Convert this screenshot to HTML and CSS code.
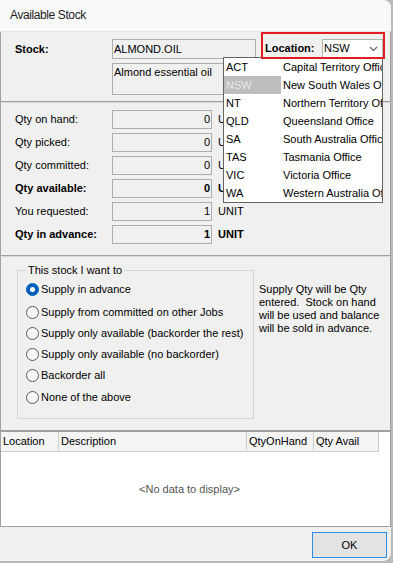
FILE: index.html
```html
<!DOCTYPE html>
<html lang="en">
<head>
<meta charset="utf-8">
<title>Available Stock</title>
<link rel="stylesheet" href="styles.css">
</head>
<body>
<div class="window">
  <div class="titlebar">Available Stock</div>

  <div class="panel stock-panel">
    <div class="label bold">Stock:</div>
    <div class="field code-field">ALMOND.OIL</div>
    <div class="location">
      <span class="label bold loc-label">Location:</span>
      <div class="combo">
        <span class="combo-value">NSW</span>
        <svg class="chevron" width="9" height="6" viewBox="0 0 9 6"><polyline points="1,1 4.5,4.5 8,1" fill="none" stroke="#6b6b6b" stroke-width="1.3"/></svg>
      </div>
    </div>
    <div class="field desc-field">Almond essential oil</div>
  </div>

  <div class="panel qty-panel">
    <div class="label">Qty on hand:</div><div class="field num">0</div><div class="unit">UNIT</div>
    <div class="label">Qty picked:</div><div class="field num">0</div><div class="unit">UNIT</div>
    <div class="label">Qty committed:</div><div class="field num">0</div><div class="unit">UNIT</div>
    <div class="label bold">Qty available:</div><div class="field num bold">0</div><div class="unit bold">UNIT</div>
    <div class="label">You requested:</div><div class="field num">1</div><div class="unit">UNIT</div>
    <div class="label bold">Qty in advance:</div><div class="field num bold">1</div><div class="unit bold">UNIT</div>
  </div>

  <div class="panel choice-panel">
    <fieldset class="group">
      <legend>This stock I want to</legend>
      <label class="opt"><span class="radio on"></span>Supply in advance</label>
      <label class="opt gap"><span class="radio"></span>Supply from committed on other Jobs</label>
      <label class="opt"><span class="radio"></span>Supply only available (backorder the rest)</label>
      <label class="opt"><span class="radio"></span>Supply only available (no backorder)</label>
      <label class="opt"><span class="radio"></span>Backorder all</label>
      <label class="opt gap1"><span class="radio"></span>None of the above</label>
    </fieldset>
    <p class="hint">Supply Qty will be Qty<br>entered.&nbsp; Stock on hand<br>will be used and balance<br>will be sold in advance.</p>
  </div>

  <div class="grid">
    <div class="grid-head">
      <div class="th c-loc">Location</div>
      <div class="th c-desc">Description</div>
      <div class="th c-qoh">QtyOnHand</div>
      <div class="th c-qa">Qty Avail</div>
    </div>
    <div class="grid-body">&lt;No data to display&gt;</div>
  </div>

  <div class="footer"><button class="ok">OK</button></div>

  <div class="dropdown">
    <div class="dd-row"><span class="dd-code">ACT</span><span class="dd-name">Capital Territory Office</span></div>
    <div class="dd-row sel"><span class="dd-code">NSW</span><span class="dd-name">New South Wales Office</span></div>
    <div class="dd-row"><span class="dd-code">NT</span><span class="dd-name">Northern Territory Office</span></div>
    <div class="dd-row"><span class="dd-code">QLD</span><span class="dd-name">Queensland Office</span></div>
    <div class="dd-row"><span class="dd-code">SA</span><span class="dd-name">South Australia Office</span></div>
    <div class="dd-row"><span class="dd-code">TAS</span><span class="dd-name">Tasmania Office</span></div>
    <div class="dd-row"><span class="dd-code">VIC</span><span class="dd-name">Victoria Office</span></div>
    <div class="dd-row"><span class="dd-code">WA</span><span class="dd-name">Western Australia Office</span></div>
  </div>
  <div class="annot"></div>
</div>
</body>
</html>
```

FILE: styles.css
```css
* { box-sizing: border-box; }
html, body { margin: 0; padding: 0; }
body {
  width: 393px;
  height: 563px;
  overflow: hidden;
  background: #b9b9b9;
  font-family: "Liberation Sans", Arial, sans-serif;
  font-size: 11px;
  line-height: 13px;
  color: #000;
}
.window {
  position: relative;
  width: 391px;
  height: 561px;
  background: #f0f0f0;
  border-radius: 0 8px 8px 0;
  overflow: hidden;
  display: flex;
  flex-direction: column;
}
.titlebar {
  flex: none;
  height: 32px;
  display: flex;
  align-items: center;
  padding-left: 10px;
  background: #f9f9f9;
  border-bottom: 1px solid #e6e6e6;
  font-size: 12px;
  letter-spacing: -0.4px;
  color: #1c1c1c;
}
.panel {
  flex: none;
  border: 1px solid #a0a0a0;
  border-top-color: #d8d8d8;
}
.bold { font-weight: bold; }
.label { align-self: center; white-space: nowrap; }
.field {
  background: #f0f0f0;
  border: 1px solid #adadad;
  white-space: nowrap;
  overflow: hidden;
}

/* stock panel */
.stock-panel {
  border-top: 0;
  height: 70px;
  padding: 7px 0 6px 14px;
  display: grid;
  grid-template-columns: 97px 144px auto;
  grid-template-rows: 20px 32px;
  row-gap: 4px;
}
.code-field { grid-column: 2; grid-row: 1; line-height: 18px; padding-left: 1px; }
.desc-field { grid-column: 2; grid-row: 2; padding: 2px 0 0 1px; }
.location {
  grid-column: 3;
  grid-row: 1;
  display: flex;
  align-items: center;
  margin-left: 9px;
  height: 19px;
}
.loc-label { width: 57px; }
.combo {
  width: 61px;
  height: 19px;
  background: #fff;
  border: 1px solid #b4b4b4;
  display: flex;
  align-items: center;
  justify-content: space-between;
  padding: 0 4px 0 1px;
}
.chevron { display: block; }

/* qty panel */
.qty-panel {
  height: 154px;
  padding: 7px 0 0 14px;
  display: grid;
  grid-template-columns: 97px 100px auto;
  grid-auto-rows: 19px;
  row-gap: 4px;
  align-items: center;
}
.num {
  height: 19px;
  text-align: right;
  line-height: 17px;
  padding-right: 1px;
}
.unit { padding-left: 6px; white-space: nowrap; }

/* choice panel */
.choice-panel {
  height: 175px;
  padding: 7px 0 0 16px;
  display: flex;
  align-items: flex-start;
}
.group {
  margin: 0;
  width: 237px;
  padding: 2px 8px 10px 8px;
  border: 1px solid #d5d5d5;
  min-width: 0;
}
.group legend { padding: 0 2px; line-height: 13px; }
.opt {
  display: flex;
  align-items: center;
  height: 21px;
  white-space: nowrap;
}
.opt.gap { margin-top: 2px; }
.opt.gap1 { margin-top: 1px; }
.radio {
  flex: none;
  width: 13px;
  height: 13px;
  border-radius: 50%;
  border: 1px solid #5a5a5a;
  background: #f7f7f7;
  margin-right: 2px;
}
.radio.on {
  background: #005fb8;
  border-color: #005fb8;
  display: flex;
  align-items: center;
  justify-content: center;
}
.radio.on::after {
  content: "";
  width: 5px;
  height: 5px;
  border-radius: 50%;
  background: #fff;
}
.hint {
  margin: 19px 0 0 5px;
  line-height: 13px;
  white-space: nowrap;
}

/* grid */
.grid {
  flex: none;
  height: 96px;
  border: 1px solid #a0a0a0;
  background: #fff;
}
.grid-head { display: flex; height: 20px; }
.th {
  height: 20px;
  background: #f4f4f4;
  border-right: 1px solid #cdcdcd;
  border-bottom: 1px solid #cdcdcd;
  padding-left: 2px;
  line-height: 19px;
  white-space: nowrap;
}
.c-loc { width: 58px; }
.c-desc { width: 188px; }
.c-qoh { width: 67px; }
.c-qa { width: 65px; }
.grid-body {
  height: 74px;
  display: flex;
  align-items: center;
  justify-content: center;
  padding-right: 12px;
  color: #555;
}

/* footer */
.footer {
  flex: 1;
  display: flex;
  justify-content: flex-end;
  align-items: flex-start;
  padding: 5px 4px 0 0;
}
.ok {
  width: 75px;
  height: 26px;
  border: 1px solid #2f8de4;
  border-radius: 0;
  background: #e3e3e3;
  font: inherit;
  color: #000;
  padding: 0;
}

/* overlays */
.dropdown {
  position: absolute;
  left: 223px;
  top: 57px;
  width: 160px;
  background: #fff;
  border: 1px solid #646464;
  z-index: 2;
}
.dd-row { display: flex; height: 18px; line-height: 18px; white-space: nowrap; }
.dd-code { flex: none; width: 57px; padding-left: 2px; }
.dd-name { flex: 1; padding-left: 2px; overflow: hidden; }
.dd-row.sel .dd-code { background: #bdbdbd; color: #e9e9e9; }
.annot {
  position: absolute;
  left: 261px;
  top: 32px;
  width: 124px;
  height: 27px;
  border: 2px solid #e31b23;
  z-index: 3;
}
```
